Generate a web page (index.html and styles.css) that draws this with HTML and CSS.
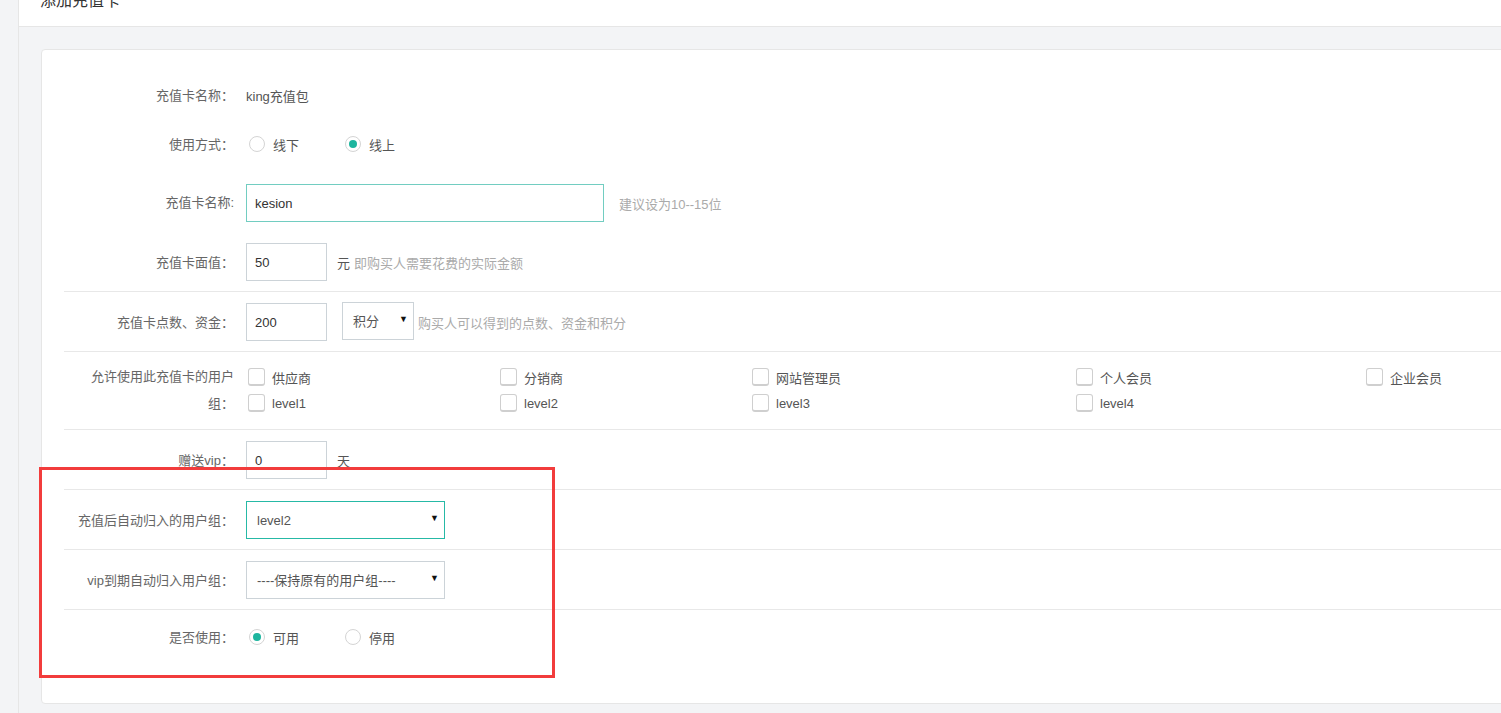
FILE: index.html
```html
<!DOCTYPE html>
<html lang="zh-CN">
<head>
    <meta charset="UTF-8">
    <title>添加充值卡</title>
    <link rel="stylesheet" href="styles.css">
</head>
<body>
    <div class="side"></div>
    <div class="main">
        <div class="page-head">
            <h3 class="page-title">添加充值卡</h3>
        </div>
        <div class="content">
            <div class="card">
                <div class="form-row row-text">
                    <label class="form-label">充值卡名称<span class="colon">：</span></label>
                    <div class="form-ctrl">king充值包</div>
                </div>
                <div class="form-row row-radio">
                    <label class="form-label">使用方式<span class="colon">：</span></label>
                    <div class="form-ctrl">
                        <span class="radio"><i class="radio-dot"></i>线下</span>
                        <span class="radio"><i class="radio-dot checked"></i>线上</span>
                    </div>
                </div>
                <div class="form-row">
                    <label class="form-label">充值卡名称:</label>
                    <div class="form-ctrl">
                        <input type="text" class="input input-long focus" value="kesion">
                        <span class="tip tip-gap">建议设为10--15位</span>
                    </div>
                </div>
                <div class="form-row">
                    <label class="form-label">充值卡面值<span class="colon">：</span></label>
                    <div class="form-ctrl">
                        <input type="text" class="input input-short" value="50">
                        <span class="unit">元</span><span class="tip">即购买人需要花费的实际金额</span>
                    </div>
                </div>
                <div class="form-row line">
                    <label class="form-label">充值卡点数、资金<span class="colon">：</span></label>
                    <div class="form-ctrl">
                        <input type="text" class="input input-short" value="200">
                        <span class="select select-small">
                            <select><option>积分</option></select>
                        </span>
                        <span class="tip tip-near">购买人可以得到的点数、资金和积分</span>
                    </div>
                </div>
                <div class="form-row line row-groups">
                    <label class="form-label">允许使用此充值卡的用户<br>组<span class="colon">：</span></label>
                    <div class="form-ctrl">
                        <div class="check-grid">
                            <span class="check"><i class="check-box"></i>供应商</span>
                            <span class="check"><i class="check-box"></i>分销商</span>
                            <span class="check"><i class="check-box"></i>网站管理员</span>
                            <span class="check"><i class="check-box"></i>个人会员</span>
                            <span class="check"><i class="check-box"></i>企业会员</span>
                            <span class="check"><i class="check-box"></i>level1</span>
                            <span class="check"><i class="check-box"></i>level2</span>
                            <span class="check"><i class="check-box"></i>level3</span>
                            <span class="check"><i class="check-box"></i>level4</span>
                        </div>
                    </div>
                </div>
                <div class="form-row line">
                    <label class="form-label">赠送vip<span class="colon">：</span></label>
                    <div class="form-ctrl">
                        <input type="text" class="input input-short" value="0">
                        <span class="unit">天</span>
                    </div>
                </div>
                <div class="form-row line">
                    <label class="form-label">充值后自动归入的用户组<span class="colon">：</span></label>
                    <div class="form-ctrl">
                        <span class="select select-wide active">
                            <select><option>level2</option></select>
                        </span>
                    </div>
                </div>
                <div class="form-row line">
                    <label class="form-label">vip到期自动归入用户组<span class="colon">：</span></label>
                    <div class="form-ctrl">
                        <span class="select select-wide">
                            <select><option>----保持原有的用户组----</option></select>
                        </span>
                    </div>
                </div>
                <div class="form-row line row-last">
                    <label class="form-label">是否使用<span class="colon">：</span></label>
                    <div class="form-ctrl">
                        <span class="radio"><i class="radio-dot checked"></i>可用</span>
                        <span class="radio"><i class="radio-dot"></i>停用</span>
                    </div>
                </div>
            </div>
            <div class="mark-box"></div>
        </div>
    </div>
</body>
</html>
```

FILE: styles.css
```css
body {
    margin: 0;
    font-family: "Liberation Sans", "Noto Sans CJK SC", sans-serif;
    font-size: 13px;
    color: #555;
    background: #f3f4f6;
    display: flex;
    height: 713px;
    overflow: hidden;
}
.side {
    width: 18px;
    flex: none;
    background: #f3f4f6;
    border-right: 1px solid #e6e6e6;
}
.main {
    flex: 1;
    min-width: 0;
}
.page-head {
    height: 26px;
    background: #fff;
    border-bottom: 1px solid #e6e6e6;
    overflow: hidden;
}
.page-title {
    margin: -11px 0 0 21px;
    font-size: 16px;
    font-weight: normal;
    color: #333;
    line-height: 24px;
}
.content {
    position: relative;
    padding: 22px 0 0 22px;
}
.card {
    margin-right: -30px;
    background: #fff;
    border: 1px solid #e6e6e6;
    border-radius: 4px;
    padding: 21px 0 40px 22px;
}
.form-row {
    display: flex;
    align-items: center;
    padding: 11px 0 10px;
    min-height: 38px;
}
.form-row.line {
    border-top: 1px solid #e8e8e8;
}
.row-text {
    min-height: 20px;
    padding: 14px 0 12px;
}
.row-radio {
    min-height: 34px;
    padding: 9px 0 12px;
}
.row-last {
    min-height: 32px;
}
.row-groups {
    padding: 12px 0;
    align-items: flex-start;
}
.row-groups .form-label {
    line-height: 26px;
}
.form-label {
    width: 170px;
    flex: none;
    padding-right: 12px;
    text-align: right;
    color: #666;
    line-height: 20px;
}
.colon {
    font-family: "Noto Sans CJK TC", sans-serif;
}
.form-ctrl {
    flex: 1;
    display: flex;
    align-items: center;
    color: #555;
}
.input {
    box-sizing: border-box;
    height: 38px;
    border: 1px solid #ccd3d8;
    padding: 0 8px;
    font-family: inherit;
    font-size: 13px;
    color: #333;
    outline: none;
}
.input.focus {
    border-color: #72cdc1;
}
.input-long {
    width: 358px;
}
.input-short {
    width: 81px;
}
.tip {
    color: #aaa;
}
.tip-gap {
    margin-left: 15px;
}
.tip-near {
    margin-left: 4px;
}
.unit {
    color: #555;
    margin: 0 4px 0 10px;
}
.select {
    position: relative;
    display: inline-block;
}
.select select {
    box-sizing: border-box;
    height: 38px;
    width: 100%;
    border: 1px solid #ccd3d8;
    background: #fff;
    padding: 0 10px;
    font-family: inherit;
    font-size: 13px;
    color: #555;
    appearance: none;
    -webkit-appearance: none;
    outline: none;
    border-radius: 0;
}
.select::after {
    content: "\25BC";
    position: absolute;
    right: 6px;
    top: 12px;
    font-size: 9px;
    color: #111;
    pointer-events: none;
}
.select-small {
    width: 72px;
    margin-left: 15px;
    margin-top: -2px;
}
.select-wide {
    width: 199px;
}
.select.active select {
    border-color: #26b9a6;
}
.radio {
    display: inline-flex;
    align-items: center;
    width: 96px;
    color: #555;
}
.radio-dot {
    box-sizing: border-box;
    width: 16px;
    height: 16px;
    margin: 0 8px 0 3px;
    border: 1px solid #d4d4d4;
    border-radius: 50%;
    position: relative;
    background: #fff;
}
.radio-dot.checked::after {
    content: "";
    position: absolute;
    left: 3px;
    top: 3px;
    width: 8px;
    height: 8px;
    border-radius: 50%;
    background: #1db59e;
}
.check-grid {
    display: grid;
    grid-template-columns: 252px 252px 324px 290px auto;
    grid-auto-rows: 26px;
}
.check {
    display: flex;
    align-items: center;
    color: #555;
}
.check-box {
    box-sizing: border-box;
    width: 17px;
    height: 18px;
    margin: 0 7px 0 2px;
    border: 1px solid #cfcfcf;
    border-bottom-width: 2px;
    border-radius: 3px;
    background: #fff;
}
.mark-box {
    position: absolute;
    left: 20px;
    top: 440px;
    width: 510px;
    height: 205px;
    border: 3px solid #f23c3c;
    pointer-events: none;
}
```
